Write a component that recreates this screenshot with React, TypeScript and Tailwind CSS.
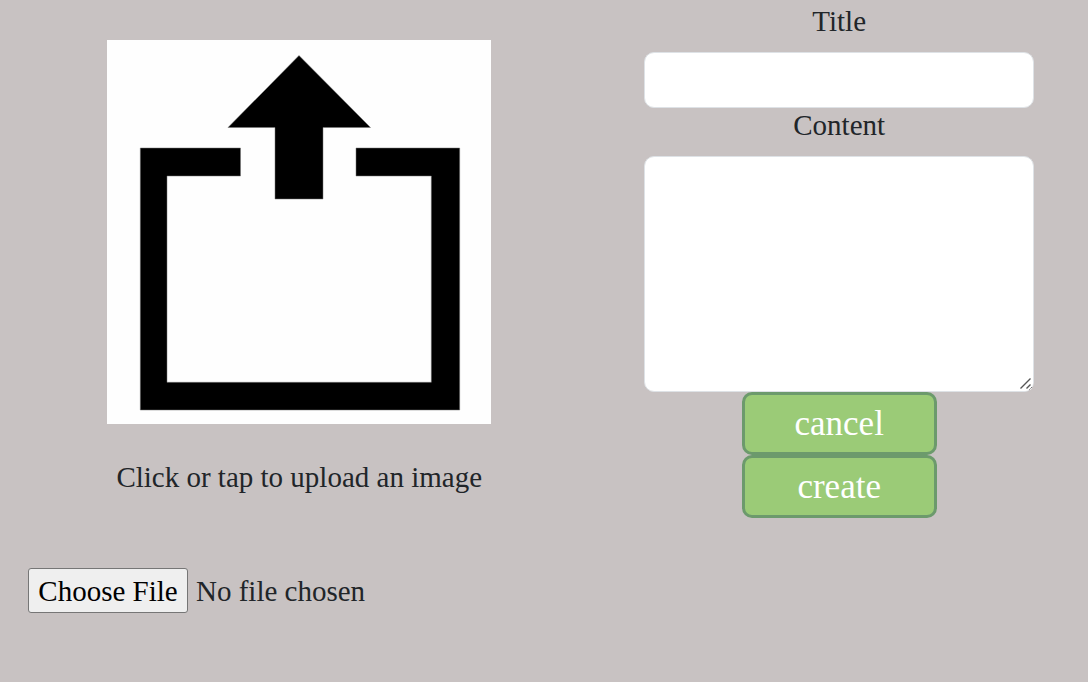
import React from "react";

function UploadPicture() {
  return (
    <svg viewBox="0 0 384 384" className="block w-96 max-w-full bg-[#fefefe]" aria-hidden="true">
      <g fill="#000" stroke="#777" strokeWidth="0.5">
        <path d="M192 15.5 263.5 87.5H216V159H168V87.5H121Z" />
        <path d="M33.3 108H133.5V136H60V342.3H324.3V136H249V108H352.7V370H33.3Z" />
      </g>
    </svg>
  );
}

function ResizeGrip() {
  return (
    <svg
      viewBox="0 0 14 14"
      className="pointer-events-none absolute right-px bottom-px h-3.5 w-3.5"
      aria-hidden="true"
    >
      <path d="M0 0H14V6Q13 13 6 14H0Z" fill="#fff" />
      <path d="M1.5 11.5 11.5 1.5M7.5 11.5 11.5 7.5" stroke="#555" strokeWidth="1.4" fill="none" />
    </svg>
  );
}

const fieldClass =
  "block w-full rounded-[10px] border border-[#dee2e6] bg-white px-3 py-2 text-[29px] leading-[38px] outline-none focus:border-[#86b7fe]";
const buttonClass =
  "h-[63px] w-[195px] cursor-pointer rounded-[10px] border-3 border-[#6c9a6c] bg-[#9bcb77] text-[35px] leading-[48px] text-white";

export default function App() {
  return (
    <main className="min-h-screen bg-[#c8c2c2] font-['Liberation_Serif',serif] text-[29px] leading-[42px] text-[#212529]">
      <form
        className="grid grid-cols-[55fr_45fr] items-start"
        onSubmit={(event) => event.preventDefault()}
      >
        <section className="min-w-0 px-7 pt-10">
          <label htmlFor="image" className="flex cursor-pointer flex-col items-center gap-8 text-center">
            <UploadPicture />
            <span>Click or tap to upload an image</span>
          </label>
          <input
            id="image"
            type="file"
            accept="image/*"
            className="mt-[70px] block w-full text-[29px] leading-[42px] file:mr-2 file:h-[45px] file:w-40 file:rounded-[3px] file:border file:border-solid file:border-[#767676] file:bg-[#efefef] file:p-0 file:text-black"
          />
        </section>
        <section className="flex min-w-0 flex-col items-center pr-[54px] pl-[46px]">
          <label htmlFor="title" className="mb-2.5">Title</label>
          <input id="title" type="text" className={`${fieldClass} h-14`} />
          <label htmlFor="content" className="-mt-1 mb-2.5">Content</label>
          <div className="relative w-full">
            <textarea id="content" className={`${fieldClass} h-[236px] resize-y`} />
            <ResizeGrip />
          </div>
          <button type="button" className={buttonClass}>cancel</button>
          <button type="submit" className={buttonClass}>create</button>
        </section>
      </form>
    </main>
  );
}
